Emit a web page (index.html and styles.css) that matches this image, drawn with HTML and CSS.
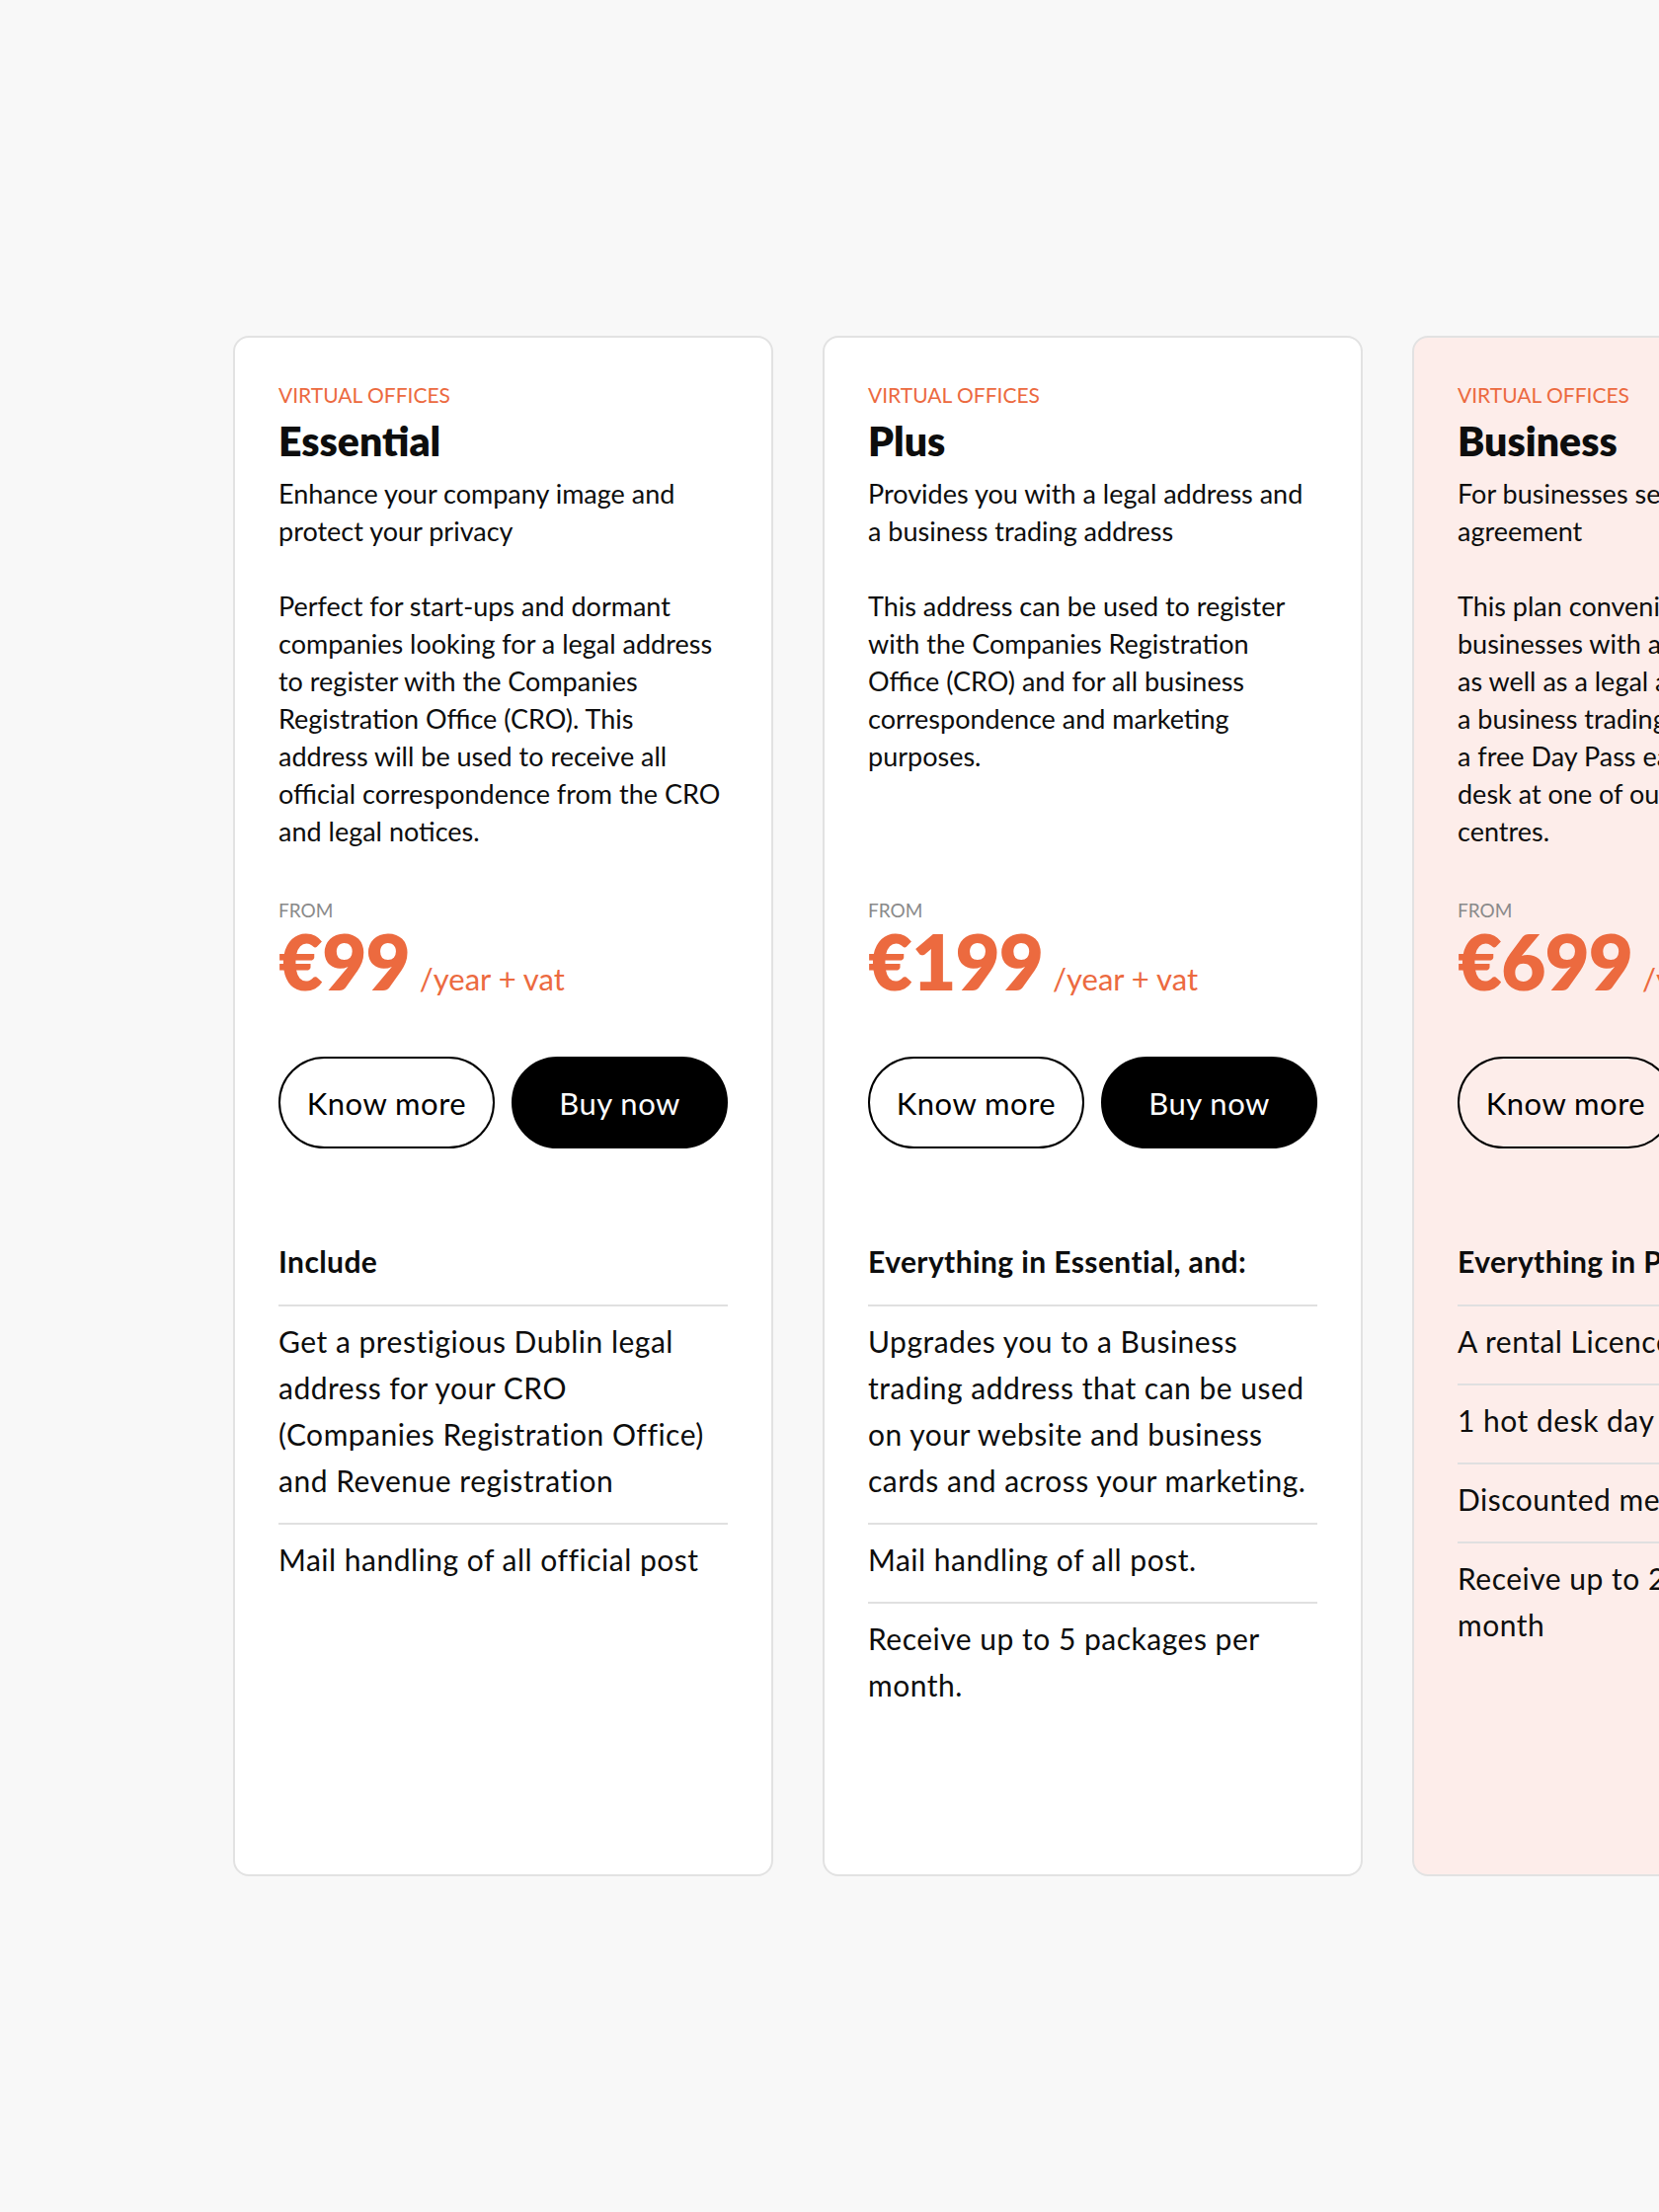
FILE: index.html
```html
<!DOCTYPE html>
<html>

<head>
  <meta name="viewport" content="width=device-width, initial-scale=1">
  <meta charset="UTF-8">
  <title>Virtual Offices - Plans</title>
  <link rel="stylesheet" href="styles.css">
</head>

<body>

  <div class="plans">

    <div class="plan">
      <div class="intro">
        <p class="kicker">VIRTUAL OFFICES</p>
        <h2 class="name">Essential</h2>
        <p class="lead">Enhance your company image and<br>protect your privacy</p>
        <p class="about">Perfect for start-ups and dormant<br>companies looking for a legal address<br>to register with the Companies<br>Registration Office (CRO). This<br>address will be used to receive all<br>official correspondence from the CRO<br>and legal notices.</p>
      </div>
      <p class="from">FROM</p>
      <p class="price">€99<span class="per">/year + vat</span></p>
      <div class="actions">
        <a href="#" class="btn btn-line">Know more</a>
        <a href="#" class="btn btn-dark">Buy now</a>
      </div>
      <h3 class="inc">Include</h3>
      <ul class="feats">
        <li>Get a prestigious Dublin legal address for your CRO (Companies Registration Office) and Revenue registration</li>
        <li>Mail handling of all official post</li>
      </ul>
    </div>

    <div class="plan">
      <div class="intro">
        <p class="kicker">VIRTUAL OFFICES</p>
        <h2 class="name">Plus</h2>
        <p class="lead">Provides you with a legal address and<br>a business trading address</p>
        <p class="about">This address can be used to register<br>with the Companies Registration<br>Office (CRO) and for all business<br>correspondence and marketing<br>purposes.</p>
      </div>
      <p class="from">FROM</p>
      <p class="price">€199<span class="per">/year + vat</span></p>
      <div class="actions">
        <a href="#" class="btn btn-line">Know more</a>
        <a href="#" class="btn btn-dark">Buy now</a>
      </div>
      <h3 class="inc">Everything in Essential, and:</h3>
      <ul class="feats">
        <li>Upgrades you to a Business trading address that can be used on your website and business cards and across your marketing.</li>
        <li>Mail handling of all post.</li>
        <li>Receive up to 5 packages per month.</li>
      </ul>
    </div>

    <div class="plan plan-hot">
      <div class="intro">
        <p class="kicker">VIRTUAL OFFICES</p>
        <h2 class="name">Business</h2>
        <p class="lead">For businesses seeking a rental<br>agreement</p>
        <p class="about">This plan conveniently provides<br>businesses with a rental licence<br>as well as a legal address and<br>a business trading address, plus<br>a free Day Pass each month to hot<br>desk at one of our co-working<br>centres.</p>
      </div>
      <p class="from">FROM</p>
      <p class="price">€699<span class="per">/year + vat</span></p>
      <div class="actions">
        <a href="#" class="btn btn-line">Know more</a>
        <a href="#" class="btn btn-dark">Buy now</a>
      </div>
      <h3 class="inc">Everything in Plus, and:</h3>
      <ul class="feats">
        <li>A rental Licence agreement</li>
        <li>1 hot desk day per month</li>
        <li>Discounted meeting rooms</li>
        <li>Receive up to 20 packages per month</li>
      </ul>
    </div>

  </div>

</body>

</html>
```

FILE: styles.css
```css
body {
  margin: 0;
  background-color: #f8f8f8;
  font-family: Lato, "Open Sans", sans-serif;
  color: #0d0d0d;
  overflow-x: hidden;
}

.plans {
  display: flex;
  gap: 50px;
  padding: 340px 0 340px 236px;
  width: max-content;
}

.plan {
  flex-shrink: 0;
  width: 547px;
  height: 1560px;
  box-sizing: border-box;
  padding: 44px 44px;
  background-color: white;
  border: 2px solid #e2e2e2;
  border-radius: 16px;
}

.plan-hot {
  background-color: #fdedea;
}

.plan p,
.plan h2,
.plan h3 {
  margin: 0;
}

.intro {
  height: 524px;
}

.kicker {
  font-size: 21px;
  line-height: 28px;
  color: #ec6a3f;
}

.name {
  margin-top: 8px !important;
  font-size: 41px;
  line-height: 50px;
  font-weight: 800;
}

.lead,
.about {
  font-size: 27px;
  line-height: 38px;
  white-space: nowrap;
}

.lead {
  margin-top: 9px !important;
}

.about {
  margin-top: 38px !important;
}

.from {
  font-size: 19px;
  line-height: 24px;
  color: #8a8a8a;
}

.price {
  margin-top: 4px !important;
  font-size: 78px;
  line-height: 70px;
  font-weight: 800;
  color: #ec6a3f;
  letter-spacing: -1px;
}

.per {
  margin-left: 10px;
  font-size: 31px;
  font-weight: 400;
  letter-spacing: 0;
}

.actions {
  display: flex;
  gap: 17px;
  margin-top: 44px;
}

.btn {
  display: flex;
  align-items: center;
  justify-content: center;
  width: 220px;
  height: 93px;
  box-sizing: border-box;
  border: 2px solid black;
  border-radius: 50px;
  font-size: 31px;
  letter-spacing: 0.5px;
  color: black;
  text-decoration: none;
}

.btn-dark {
  background-color: black;
  color: white;
}

.inc {
  margin-top: 96px !important;
  padding-bottom: 26px;
  border-bottom: 2px solid #e0e0e0;
  font-size: 30px;
  line-height: 36px;
  font-weight: 700;
  letter-spacing: 0.4px;
}

.feats {
  list-style: none;
  margin: 0;
  padding: 0;
}

.feats li {
  padding: 12px 0 19px;
  border-bottom: 2px solid #e0e0e0;
  font-size: 30px;
  line-height: 47px;
  letter-spacing: 0.5px;
}

.feats li:last-child {
  border-bottom: none;
}
```
